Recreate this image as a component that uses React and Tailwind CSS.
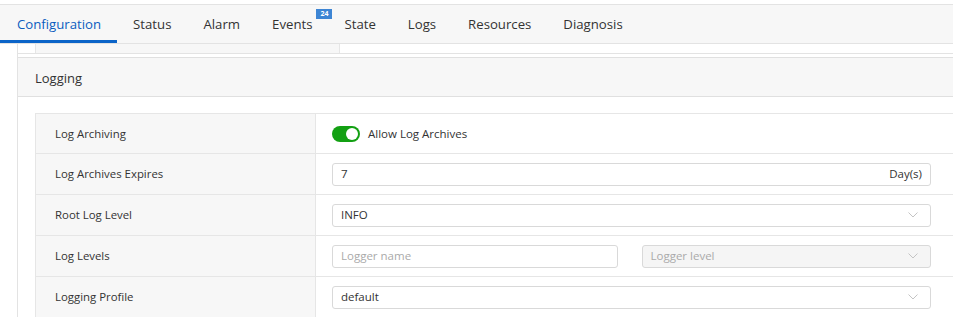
import React from 'react';

const font = { fontFamily: '"Open Sans", "Noto Sans", sans-serif' };

const tabs = ['Configuration', 'Status', 'Alarm', 'Events', 'State', 'Logs', 'Resources', 'Diagnosis'];

const Chevron = () => (
  <svg width="10" height="6" viewBox="0 0 10 6" className="shrink-0">
    <path d="M0.5 0.5 L5 5 L9.5 0.5" fill="none" stroke="#c4c4c4" strokeWidth="1" />
  </svg>
);

const Row = ({ label, children, first }) => (
  <div className={`flex h-[41px] border-b border-[#e6e6e6] ${first ? 'border-t h-[40px]' : ''}`}>
    <div className="w-[280px] shrink-0 bg-[#f7f7f7] border-r border-[#e6e6e6] flex items-center pl-[19px] text-[11.4px] text-[#333]">
      {label}
    </div>
    <div className="flex-1 flex items-center pl-[16px] pr-[22px]">{children}</div>
  </div>
);

export default function App() {
  return (
    <div className="w-[953px] h-[317px] overflow-hidden bg-white" style={font}>
      <div className="h-[4px] border-b border-[#e3e3e3] box-content" />
      <div className="flex h-[38px] bg-[#f7f7f7] border-b border-[#e3e3e3] box-content">
        {tabs.map((t, i) => (
          <div
            key={t}
            className={`relative flex items-center px-[16px] pt-[5px] text-[13.2px] border-b-[3px] ${
              i === 0 ? 'pl-[17px] text-[#0b5dbf] border-[#0b64c8]' : 'text-[#333] border-transparent'
            }`}
          >
            {t}
            {t === 'Events' && (
              <span className="absolute top-[4px] right-[-4px] bg-[#3d85d4] text-white text-[7px] font-bold leading-[10px] px-[4px]">
                24
              </span>
            )}
          </div>
        ))}
      </div>

      <div className="ml-[17px] border-l border-[#e3e3e3]">
        <div className="pl-[17px] flex h-[9px] border-b border-[#e3e3e3] box-content">
          <div className="w-[305px] bg-[#f7f7f7] border-l border-r border-[#e6e6e6]" />
          <div className="flex-1" />
        </div>
        <div className="h-[3px]" />
        <div className="h-[40px] bg-[#f7f7f7] border-t border-b border-[#e0e0e0] flex items-center pl-[17px] pt-[3px] text-[13px] text-[#333]">
          Logging
        </div>
        <div className="pt-[16px] pl-[17px]">
          <div className="border-l border-[#e6e6e6]">
            <Row label="Log Archiving" first>
              <div className="w-[28px] h-[16px] rounded-full bg-[#13a013] flex items-center justify-end pr-[2px]">
                <div className="w-[12px] h-[12px] rounded-full bg-white" />
              </div>
              <span className="ml-[8px] text-[11.5px] text-[#333]">Allow Log Archives</span>
            </Row>
            <Row label="Log Archives Expires">
              <div className="flex-1 h-[23px] border border-[#d9d9d9] rounded-[3px] flex items-center justify-between px-[8px] text-[11.5px] text-[#333]">
                <span>7</span>
                <span>Day(s)</span>
              </div>
            </Row>
            <Row label="Root Log Level">
              <div className="flex-1 h-[23px] border border-[#d9d9d9] rounded-[3px] flex items-center justify-between pl-[8px] pr-[12px] text-[11.5px] text-[#333]">
                <span>INFO</span>
                <Chevron />
              </div>
            </Row>
            <Row label="Log Levels">
              <div className="flex-1 flex gap-[24px]">
                <div className="flex-1 h-[23px] border border-[#d9d9d9] rounded-[3px] flex items-center px-[8px] text-[11.5px] text-[#aaa]">
                  Logger name
                </div>
                <div className="flex-1 h-[23px] border border-[#d9d9d9] bg-[#f5f5f5] rounded-[3px] flex items-center justify-between pl-[8px] pr-[12px] text-[11.5px] text-[#aaa]">
                  <span>Logger level</span>
                  <Chevron />
                </div>
              </div>
            </Row>
            <Row label="Logging Profile">
              <div className="flex-1 h-[23px] border border-[#d9d9d9] rounded-[3px] flex items-center justify-between pl-[8px] pr-[12px] text-[11.5px] text-[#333]">
                <span>default</span>
                <Chevron />
              </div>
            </Row>
          </div>
        </div>
      </div>
    </div>
  );
}
